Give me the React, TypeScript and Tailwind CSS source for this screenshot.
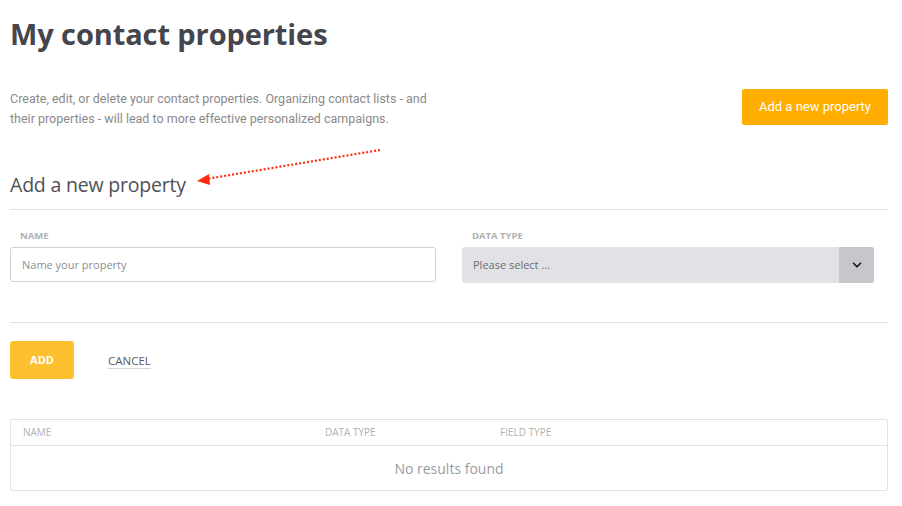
import { ChevronDown } from "lucide-react";

export default function App() {
  return (
    <div className="w-[902px] h-[506px] bg-white overflow-hidden pl-[10px] pr-[14px] font-['Roboto',sans-serif]">
      <h1 className="pt-[14px] text-[29px] leading-[40px] font-bold text-[#45454d] font-['Open_Sans',sans-serif] tracking-[-0.1px]">
        My contact properties
      </h1>

      <div className="mt-[35px] flex items-start justify-between">
        <p className="w-[430px] text-[12.5px] leading-[20px] text-[#8a8a8a]">
          Create, edit, or delete your contact properties. Organizing contact lists - and their
          properties - will lead to more effective personalized campaigns.
        </p>
        <button className="w-[146px] h-[36px] bg-[#ffae00] text-white text-[13px] rounded-[2px]">
          Add a new property
        </button>
      </div>

      <div className="relative mt-[42px]">
        <h2 className="text-[19.5px] leading-[28px] text-[#505055] font-['Open_Sans',sans-serif] tracking-[-0.2px]">
          Add a new property
        </h2>
        {/* red dotted pointer arrow */}
        <svg className="absolute left-[170px] top-[-31px]" width="210" height="50" viewBox="0 0 210 50">
          <line x1="200" y1="10" x2="26" y2="39" stroke="#ff2a10" strokeWidth="2.2" strokeDasharray="2 2" />
          <polygon points="17,41 29,34 30,45" fill="#ff2a10" />
        </svg>
      </div>

      <div className="mt-[10px] border-t border-[#e2e2e2]" />

      <div className="mt-[20px] flex font-['Open_Sans',sans-serif]">
        <div className="w-[426px]">
          <label className="block pl-[10px] text-[9.5px] leading-[12px] font-bold text-[#b0b0b5] uppercase">
            Name
          </label>
          <input
            className="mt-[5px] w-full h-[35px] border border-[#cfcfd4] rounded-[3px] px-[11px] text-[11px] text-[#555] placeholder:text-[#8e8e93] outline-none"
            placeholder="Name your property"
          />
        </div>
        <div className="ml-[26px] w-[412px]">
          <label className="block pl-[10px] text-[9.5px] leading-[12px] font-bold text-[#b0b0b5] uppercase">
            Data type
          </label>
          <div className="mt-[5px] h-[36px] flex rounded-[3px] overflow-hidden bg-[#e1e1e6]">
            <div className="flex-1 flex items-center px-[11px] text-[11px] text-[#6c6c72]">Please select ...</div>
            <div className="w-[35px] flex items-center justify-center bg-[#c6c6cb]">
              <ChevronDown className="w-[14px] h-[14px] text-[#1a1a1a]" strokeWidth={3} />
            </div>
          </div>
        </div>
      </div>

      <div className="mt-[39px] border-t border-[#e2e2e2]" />

      <div className="mt-[18px] flex items-center font-['Open_Sans',sans-serif]">
        <button className="w-[64px] h-[38px] bg-[#fdc02e] text-white text-[11px] font-bold rounded-[3px]">
          ADD
        </button>
        <button className="ml-[34px] mt-[2px] text-[11.5px] leading-[15px] text-[#5a5a60] border-b border-[#d5d5da]">
          CANCEL
        </button>
      </div>

      <div className="mt-[40px] border border-[#e2e2e2] rounded-[2px] font-['Open_Sans',sans-serif]">
        <div className="grid grid-cols-[302px_175px_1fr] h-[26px] items-center pl-[12px] border-b border-[#e2e2e2] text-[10px] text-[#b0b0b5] uppercase">
          <div>Name</div>
          <div>Data type</div>
          <div>Field type</div>
        </div>
        <div className="h-[44px] flex items-center justify-center text-[14px] text-[#9a9aa0]">
          No results found
        </div>
      </div>
    </div>
  );
}
